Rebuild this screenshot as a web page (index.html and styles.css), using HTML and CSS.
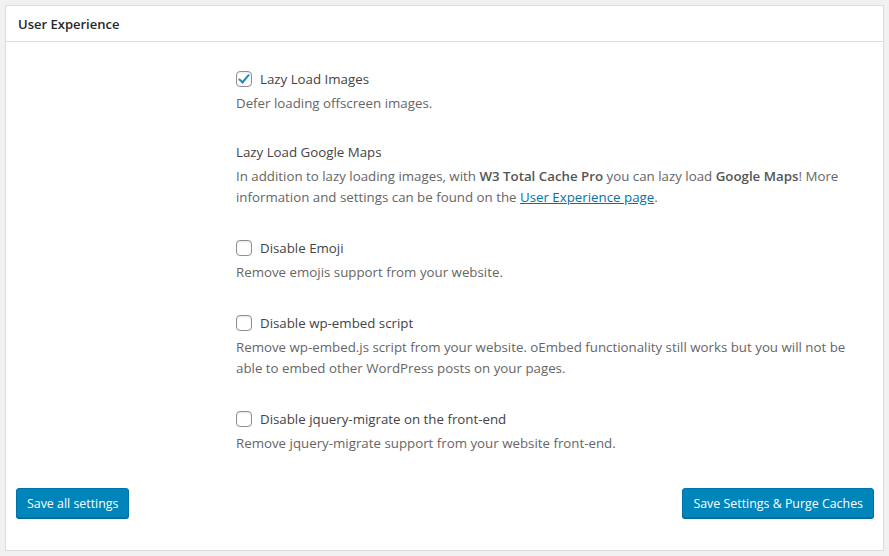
FILE: index.html
```html
<!doctype html>
<html lang="en">
<head>
    <meta charset="UTF-8">
    <meta name="viewport" content="width=device-width, initial-scale=1.0">
    <title>User Experience</title>
    <link rel="stylesheet" href="styles.css">
</head>
<body>
<div class="postbox">
    <h3 class="postbox-title">User Experience</h3>
    <div class="inside">
        <div class="options">
            <div class="option">
                <label class="option-label"><input type="checkbox" checked> Lazy Load Images</label>
                <p class="description">Defer loading offscreen images.</p>
            </div>
            <div class="option">
                <div class="option-label">Lazy Load Google Maps</div>
                <p class="description">In addition to lazy loading images, with <b>W3 Total Cache Pro</b> you can lazy load <b>Google Maps</b>! More information and settings can be found on the <a href="#">User Experience page</a>.</p>
            </div>
            <div class="option">
                <label class="option-label"><input type="checkbox"> Disable Emoji</label>
                <p class="description">Remove emojis support from your website.</p>
            </div>
            <div class="option">
                <label class="option-label"><input type="checkbox"> Disable wp-embed script</label>
                <p class="description">Remove wp-embed.js script from your website. oEmbed functionality still works but you will not be able to embed other WordPress posts on your pages.</p>
            </div>
            <div class="option">
                <label class="option-label"><input type="checkbox"> Disable jquery-migrate on the front-end</label>
                <p class="description">Remove jquery-migrate support from your website front-end.</p>
            </div>
        </div>
        <div class="actions">
            <button class="button-primary" type="button">Save all settings</button>
            <button class="button-primary" type="button">Save Settings &amp; Purge Caches</button>
        </div>
    </div>
</div>
</body>
</html>
```

FILE: styles.css
```css
body {
    font-family: "Open Sans", "Noto Sans", sans-serif;
    font-size: 13.3px;
    background-color: #f1f1f1;
    color: #444;
    margin: 0;
    padding: 5px 5px 0 5px;
}

.postbox {
    background: #fff;
    border: 1px solid #dcdcde;
    box-shadow: 0 1px 1px rgba(0, 0, 0, 0.04);
}

.postbox-title {
    margin: 0;
    padding: 0 12px;
    height: 35px;
    line-height: 36px;
    font-size: 13px;
    font-weight: 600;
    color: #23282d;
    border-bottom: 1px solid #dcdcde;
}

.inside {
    padding: 26px 9px 32px 10px;
}

.options {
    padding-left: 220px;
}

.option {
    margin-bottom: 29px;
}

.option:first-child {
    margin-bottom: 27px;
}

.option-label {
    display: flex;
    align-items: flex-start;
    height: 24px;
    line-height: 22px;
}

.description {
    margin: 1px 0 0;
    line-height: 21px;
    color: #666;
}

.description b {
    font-weight: 600;
    color: #555;
}

.description a {
    color: #0073aa;
}

input[type="checkbox"] {
    appearance: none;
    -webkit-appearance: none;
    width: 16px;
    height: 16px;
    margin: 3px 8px 0 0;
    border: 1px solid #8c8f94;
    border-radius: 4px;
    background: #fff;
    position: relative;
    box-shadow: inset 0 1px 2px rgba(0, 0, 0, 0.1);
}

input[type="checkbox"]:checked::before {
    content: "";
    position: absolute;
    left: 4px;
    top: 0px;
    width: 4px;
    height: 9px;
    border-right: 2.5px solid #1e8cbe;
    border-bottom: 2.5px solid #1e8cbe;
    transform: rotate(40deg);
}

.actions {
    display: flex;
    justify-content: space-between;
    margin-top: 34px;
}

.button-primary {
    font-family: inherit;
    font-size: 12.4px;
    background-color: #0085ba;
    border: 1px solid #0073aa;
    color: #fff;
    height: 30px;
    padding: 0 10px;
    border-radius: 3px;
    box-shadow: 0 1px 0 #006799;
    cursor: pointer;
}
```
